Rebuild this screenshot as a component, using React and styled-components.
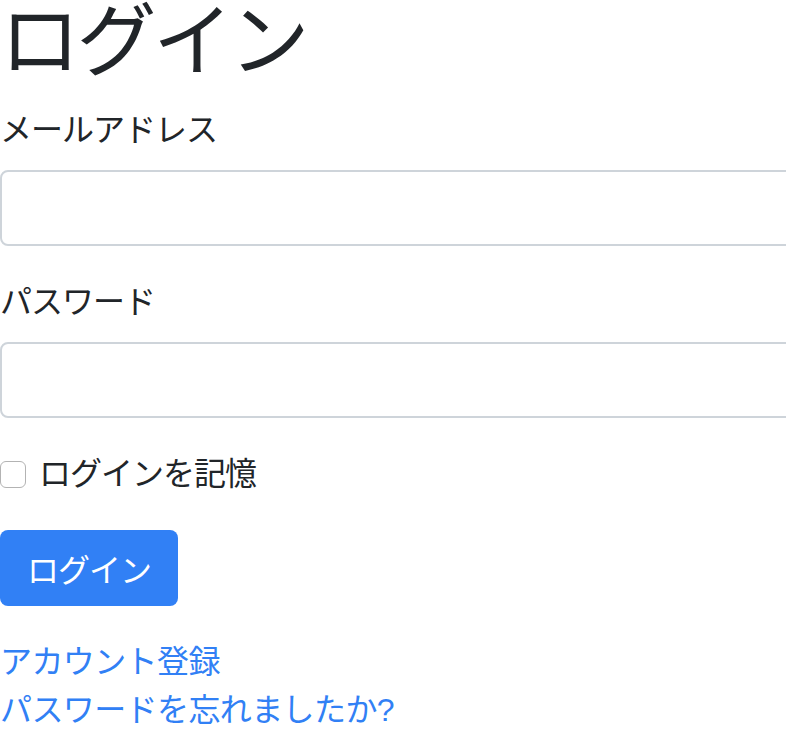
import React from "react";
import styled, { createGlobalStyle } from "styled-components";

const GlobalStyle = createGlobalStyle`
  html, body {
    margin: 0;
    padding: 0;
    overflow: hidden;
    background: #fff;
  }
  body {
    font-family: "Liberation Sans", "Noto Sans CJK JP", sans-serif;
    color: #212529;
  }
`;

const Page = styled.div`
  width: 1000px;
`;

const Title = styled.h1`
  margin: 0 0 22px;
  font-size: 80px;
  font-weight: 400;
  line-height: 84px;
  letter-spacing: -3.5px;
`;

const Form = styled.form`
  display: flex;
  flex-direction: column;
  gap: 32px;
`;

const Group = styled.div`
  display: flex;
  flex-direction: column;
  gap: 16px;
`;

const Label = styled.label`
  font-size: 32px;
  line-height: 48px;
  letter-spacing: -1px;
`;

const Input = styled.input`
  box-sizing: border-box;
  height: 76px;
  width: 100%;
  border: 2px solid #ced4da;
  border-radius: 8px;
  padding: 12px 24px;
  font-size: 32px;
`;

const Check = styled.div`
  display: flex;
  align-items: center;
  gap: 13px;
  height: 48px;
`;

const Box = styled.input.attrs({ type: "checkbox" })`
  appearance: none;
  box-sizing: border-box;
  margin: 0;
  width: 26px;
  height: 27px;
  border: 1px solid #b3b3b3;
  border-radius: 6px;
  background: #fff;
`;

const Button = styled.button`
  align-self: flex-start;
  box-sizing: border-box;
  height: 76px;
  width: 178px;
  border: none;
  border-radius: 8px;
  background: #3180f5;
  color: #fff;
  font-family: inherit;
  font-size: 32px;
  padding: 0;
  letter-spacing: -1px;
`;

const Links = styled.div`
  display: flex;
  flex-direction: column;
`;

const Link = styled.a`
  color: #3180f5;
  text-decoration: none;
  font-size: 32px;
  line-height: 48px;
  letter-spacing: -0.6px;
`;

export default function App() {
  return (
    <Page>
      <GlobalStyle />
      <Title>ログイン</Title>
      <Form onSubmit={(e) => e.preventDefault()}>
        <Group>
          <Label htmlFor="email">メールアドレス</Label>
          <Input id="email" type="email" />
        </Group>
        <Group>
          <Label htmlFor="password">パスワード</Label>
          <Input id="password" type="password" />
        </Group>
        <Check>
          <Box id="remember" />
          <Label htmlFor="remember">ログインを記憶</Label>
        </Check>
        <Button type="submit">ログイン</Button>
        <Links>
          <Link href="#">アカウント登録</Link>
          <Link href="#">パスワードを忘れましたか?</Link>
        </Links>
      </Form>
    </Page>
  );
}
